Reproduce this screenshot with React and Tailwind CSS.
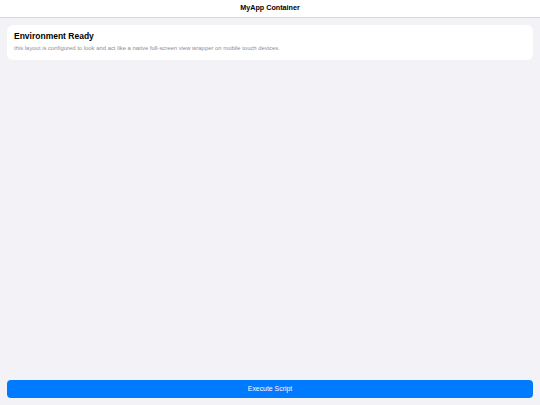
import React from 'react';

const App = () => {
  return (
    <div
      className="flex h-screen w-full flex-col bg-[#f2f2f7]"
      style={{ fontFamily: '"Liberation Sans", Arial, sans-serif' }}
    >
      <header className="flex h-[18px] flex-shrink-0 items-center justify-center border-b border-[#d8d8dc] bg-white">
        <span className="text-[7.2px] font-bold text-black">MyApp Container</span>
      </header>

      <main className="flex-1 px-[7px] pt-[7px]">
        <div className="rounded-[6px] bg-white px-[7px] pb-[8px] pt-[6px]">
          <h1 className="text-[8.5px] font-bold leading-[10px] text-black">Environment Ready</h1>
          <p className="mt-[3px] text-[5.9px] leading-[8px] text-[#8e8e93]">
            this layout is configured to look and act like a native full-screen view wrapper on mobile touch devices.
          </p>
        </div>
      </main>

      <footer className="flex-shrink-0 px-[7px] pb-[7px]">
        <button className="flex h-[18px] w-full items-center justify-center rounded-[4px] bg-[#007aff] text-[6.9px] text-white">
          Execute Script
        </button>
      </footer>
    </div>
  );
};

export default App;
